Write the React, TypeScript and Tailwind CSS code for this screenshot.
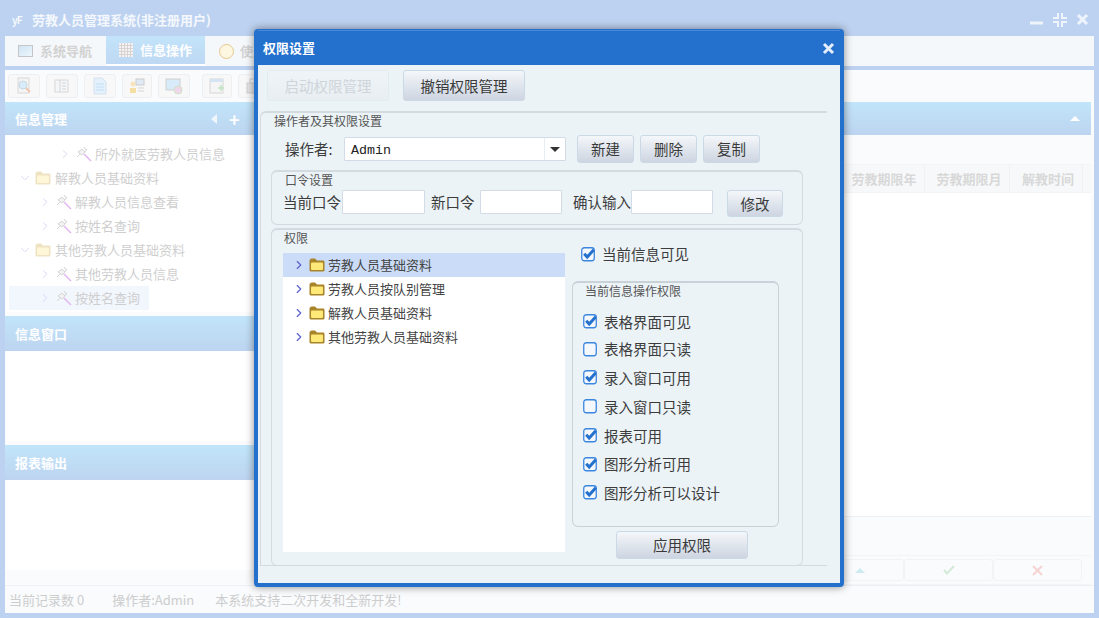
import React from 'react';
import { ChevronDown, ChevronRight } from 'lucide-react';

const font = { fontFamily: '"Noto Sans CJK SC", "Liberation Sans", sans-serif' };

function Folder({ faded }: { faded?: boolean }) {
    return (
        <svg width="16" height="14" viewBox="0 0 16 14" className="shrink-0">
            <path d="M0.5 3 Q0.5 0.5 3 0.5 H6 L8 2.5 H14.5 Q15.5 2.5 15.5 4 V12 Q15.5 13.5 14 13.5 H2 Q0.5 13.5 0.5 12 Z" fill={faded ? '#efe3c4' : '#a8842a'} />
            <rect x="2" y="4.5" width="12" height="7.5" rx="1" fill={faded ? '#fdf7d8' : '#fde878'} />
        </svg>
    );
}

function Wand() {
    return (
        <svg width="16" height="16" viewBox="0 0 16 16" className="shrink-0">
            <path d="M8 8 L15 15" stroke="#e3b8f0" strokeWidth="1.6" />
            <path d="M2 6 L6 9 L9 6 L6 3 Z M8 1 L10 4 M11 3 L9 6 M1 11 L4 8" stroke="#d6d6d6" strokeWidth="1" fill="#f2f2f2" />
        </svg>
    );
}

function TreeRow({ label, indent }: { label: string; indent: string }) {
    return (
        <div className={`flex h-6 items-center text-[13px] text-[#cfcfcf] ${indent}`}>
            <ChevronRight size={14} strokeWidth={1.5} className="text-[#d3d3f3]" />
            <span className="ml-[4px] mr-[3px]"><Wand /></span>
            {label}
        </div>
    );
}

function FolderRow({ label }: { label: string }) {
    return (
        <div className="flex h-6 items-center pl-[12px] text-[13px] text-[#cfcfcf]">
            <ChevronDown size={14} strokeWidth={1.5} className="text-[#d3d3f3]" />
            <span className="ml-[3px] mr-[4px]"><Folder faded /></span>
            {label}
        </div>
    );
}

function PanelHeader({ label }: { label: string }) {
    return (
        <div className="flex h-[35px] items-center bg-gradient-to-b from-[#c1e5fa] to-[#bdd4f0] pl-[10px] text-[13px] font-bold text-white">
            {label}
        </div>
    );
}

function ToolIcon({ variant }: { variant: number }) {
    return (
        <svg width="18" height="18" viewBox="0 0 18 18">
            {variant === 0 && <><rect x="3" y="1" width="11" height="15" fill="#f5f5f5" stroke="#d8d8d8" /><circle cx="8" cy="8" r="4" fill="#d8ecfa" stroke="#c8d8e0" /><path d="M11 11 L15 15" stroke="#f2c4b0" strokeWidth="2" /></>}
            {variant === 1 && <><rect x="2" y="3" width="13" height="12" fill="#f4f6f8" stroke="#d8d8d8" /><path d="M7 3 V15 M9 6 H13 M9 9 H13 M9 12 H13" stroke="#d5d5d5" /></>}
            {variant === 2 && <><path d="M3 1 H11 L15 5 V17 H3 Z" fill="#e4f1fb" stroke="#d5e2ee" /><path d="M5 7 H13 M5 10 H13 M5 13 H13" stroke="#bfe0f5" /></>}
            {variant === 3 && <><rect x="8" y="2" width="8" height="6" fill="#dfeaf5" stroke="#ccc" /><circle cx="5" cy="7" r="2.5" fill="#f6e4bd" /><path d="M2 16 V11 H8 V16 Z" fill="#f6dfa5" /><path d="M10 11 H16 M10 14 H16" stroke="#d5d5d5" /></>}
            {variant === 4 && <><rect x="1" y="2" width="14" height="11" fill="#d8ebf8" stroke="#cfcfcf" /><circle cx="13" cy="13" r="4" fill="#eed8ea" stroke="#cfe2c8" /></>}
            {variant === 5 && <><rect x="2" y="2" width="13" height="14" fill="#f5f5f5" stroke="#d5d5d5" /><rect x="2" y="2" width="13" height="3" fill="#d4e4f2" /><path d="M10 11 H16 M13 8 V14" stroke="#bfe3c0" strokeWidth="1.5" /></>}
            {variant === 6 && <><rect x="3" y="6" width="12" height="10" fill="#e4e4e4" stroke="#cfcfcf" /><path d="M6 6 V2 H12 V6" fill="none" stroke="#cfcfcf" /></>}
        </svg>
    );
}

function Btn({ label, size, disabled }: { label: string; size: string; disabled?: boolean }) {
    return (
        <button
            className={`flex shrink-0 items-center justify-center rounded-[3px] border text-[14.5px] ${size} ${
                disabled
                    ? 'border-[#e3ebf0] bg-gradient-to-b from-[#eef4f7] to-[#e8eef2] text-[#cfd5da]'
                    : 'border-[#cbd9e6] bg-gradient-to-b from-[#f4f7fa] to-[#cdd5e1] text-[#3a3a3a]'
            }`}
        >
            {label}
        </button>
    );
}

function Check({ label, on, row }: { label: string; on?: boolean; row: string }) {
    return (
        <div className={`flex items-center text-[14.5px] text-[#3c3c3c] ${row}`}>
            <svg width="15" height="15" viewBox="0 0 15 15" className="mr-[6px] shrink-0">
                <rect x="0.75" y="0.75" width="12.5" height="13" rx="2.5" fill="#f4f8fc" stroke="#3a86e0" strokeWidth="1.3" />
                {on && <path d="M3.2 6.8 L6.2 10 L12.8 2.8" fill="none" stroke="#2470cd" strokeWidth="3" />}
            </svg>
            {label}
        </div>
    );
}

function PermRow({ label, selected }: { label: string; selected?: boolean }) {
    return (
        <div className={`flex h-6 items-center text-[13px] text-[#444] ${selected ? 'bg-[#cbdcf8]' : ''}`}>
            <ChevronRight size={14} strokeWidth={2} className="ml-[9px] mr-[3px] text-[#5a62cc]" />
            <span className="mr-[3px]"><Folder /></span>
            {label}
        </div>
    );
}

function Field({ size }: { size: string }) {
    return <input readOnly className={`h-6 rounded-[1px] border border-[#d2dbe6] bg-white ${size}`} />;
}

function PermissionDialog() {
    return (
        <div className="absolute left-[254px] top-[29px] flex h-[558px] w-[590px] flex-col rounded-[4px] border-x-4 border-b-4 border-t border-[#2470cd] bg-[#ebf3f7] shadow-[0_0_8px_rgba(0,0,0,0.45)]">
            <div className="flex h-[35px] shrink-0 items-center justify-between border-t border-[#4a8ad8] bg-[#2470cd] pl-[5px] pr-[5px] text-[13px] font-bold text-white">
                权限设置
                <svg width="13" height="13" viewBox="0 0 13 13"><path d="M2 2 L11 11 M11 2 L2 11" stroke="#e4eefa" strokeWidth="3" /></svg>
            </div>

            <div className="ml-[9px] mt-[5px] flex gap-[14px]">
                <Btn label="启动权限管理" size="h-[31px] w-[122px]" disabled />
                <Btn label="撤销权限管理" size="h-[31px] w-[122px]" />
            </div>

            <div className="ml-[2px] mt-[10px] h-[455px] w-[567px] rounded-tl-[6px] border-b border-l border-t-2 border-[#d3dae0]">
                <div className="pl-[13px] text-[12px] leading-[16px] text-[#555]">操作者及其权限设置</div>
                <div className="mt-[6px] flex h-[28px] items-center pl-[24px]">
                    <span className="w-[59px] text-[14.5px] text-[#3c3c3c]">操作者:</span>
                    <div className="flex h-6 w-[222px] items-center rounded-[1px] border border-[#d2dbe6] bg-white pl-[6px] text-[13.33px] text-[#222]" style={{ fontFamily: '"Liberation Mono", monospace' }}>
                        <span className="pt-[3px]">Admin</span>
                        <span className="ml-auto flex h-full w-[21px] items-center justify-center border-l border-[#e8edf2]">
                            <span className="h-0 w-0 border-x-[5px] border-t-[5px] border-x-transparent border-t-[#333]" />
                        </span>
                    </div>
                    <div className="ml-[11px] flex gap-[6px]">
                        <Btn label="新建" size="h-[28px] w-[57px]" />
                        <Btn label="删除" size="h-[28px] w-[57px]" />
                        <Btn label="复制" size="h-[28px] w-[57px]" />
                    </div>
                </div>

                <div className="ml-[10px] mt-[7px] h-[55px] w-[532px] rounded-[6px] border border-t-2 border-[#d3dae0]">
                    <div className="pl-[13px] text-[12px] leading-[16px] text-[#555]">口令设置</div>
                    <div className="flex items-start pl-[11px] pt-[2px] text-[14.5px] leading-6 text-[#3c3c3c]">
                        <span className="w-[59px]">当前口令</span>
                        <Field size="w-[83px]" />
                        <span className="ml-[6px] w-[49px]">新口令</span>
                        <Field size="w-[82px]" />
                        <span className="ml-[11px] w-[58px]">确认输入</span>
                        <Field size="w-[82px]" />
                        <div className="ml-[14px]"><Btn label="修改" size="h-[27px] w-[56px]" /></div>
                    </div>
                </div>

                <div className="ml-[10px] mt-[3px] flex h-[338px] w-[532px] rounded-[6px] border border-t-2 border-[#d3dae0]">
                    <div className="flex flex-col">
                        <div className="pl-[12px] text-[12px] leading-[16px] text-[#555]">权限</div>
                        <div className="ml-[11px] mt-[7px] h-[299px] w-[282px] bg-white">
                            <PermRow label="劳教人员基础资料" selected />
                            <PermRow label="劳教人员按队别管理" />
                            <PermRow label="解教人员基础资料" />
                            <PermRow label="其他劳教人员基础资料" />
                        </div>
                    </div>
                    <div className="ml-[7px] flex flex-col">
                        <Check label="当前信息可见" on row="ml-[9px] mt-[12px] h-6" />
                        <div className="mt-[15px] h-[246px] w-[207px] rounded-[6px] border border-t-2 border-[#c9d2d9]">
                            <div className="pl-[12px] text-[12px] leading-[16px] text-[#555]">当前信息操作权限</div>
                            <div className="ml-[10px] mt-[9px] flex flex-col">
                                <Check label="表格界面可见" on row="h-[27px]" />
                                <Check label="表格界面只读" row="h-[28px]" />
                                <Check label="录入窗口可用" on row="h-[29px]" />
                                <Check label="录入窗口只读" row="h-[29px]" />
                                <Check label="报表可用" on row="h-[29px]" />
                                <Check label="图形分析可用" on row="h-[28px]" />
                                <Check label="图形分析可以设计" on row="h-[29px]" />
                            </div>
                        </div>
                        <div className="ml-[44px] mt-[4px]"><Btn label="应用权限" size="h-[28px] w-[132px]" /></div>
                    </div>
                </div>
            </div>
        </div>
    );
}

export default function App() {
    const tools = [
        { w: 'w-[32px]', ml: '' },
        { w: 'w-[32px]', ml: 'ml-[6px]' },
        { w: 'w-[32px]', ml: 'ml-[6px]' },
        { w: 'w-[30px]', ml: 'ml-[6px]' },
        { w: 'w-[32px]', ml: 'ml-[6px]' },
        { w: 'w-[30px]', ml: 'ml-[12px]' },
        { w: 'w-[30px]', ml: 'ml-[6px]' },
    ];

    return (
        <div className="relative flex h-[618px] w-[1099px] flex-col overflow-hidden bg-[#bdd2f0]" style={font}>
            {/* Title bar */}
            <div className="flex h-9 shrink-0 items-center pl-[12px] pr-[10px] pt-[3px] text-[13px] font-bold text-[#f4f8fd]">
                <span className="mr-[9px] w-[11px] text-[10px] leading-none tracking-[-1px]">yF</span>
                劳教人员管理系统(非注册用户)
                <div className="ml-auto flex items-center gap-[8px]">
                    <svg width="14" height="14" viewBox="0 0 14 14"><path d="M0 10 H13" stroke="#eef4fb" strokeWidth="3" /></svg>
                    <svg width="16" height="14" viewBox="0 0 16 14"><path d="M6 0 V5 H1 M10 0 V5 H15 M6 14 V9 H1 M10 14 V9 H15" fill="none" stroke="#eef4fb" strokeWidth="2" /></svg>
                    <svg width="13" height="13" viewBox="0 0 13 13"><path d="M2 2 L11 11 M11 2 L2 11" stroke="#eef4fb" strokeWidth="3" /></svg>
                </div>
            </div>

            <div className="mx-[5px] flex min-h-0 flex-1 flex-col bg-[#f9fbfd]">
                {/* Tabs */}
                <div className="flex h-[30px] shrink-0 bg-[#f5f8fb] text-[13px] font-bold text-[#d2d2d2]">
                    <div className="flex w-[100px] items-center pl-[13px]">
                        <span className="mr-[7px] h-[12px] w-[15px] border border-[#c5c5c5] bg-gradient-to-br from-[#cfe5f5] to-[#eef6fb]" />
                        系统导航
                    </div>
                    <div className="ml-px flex w-[99px] items-center border-b-2 border-white bg-gradient-to-b from-[#c2e4fa] to-[#bfd8f3] pl-[13px] text-white">
                        <svg width="14" height="14" viewBox="0 0 14 14" className="mr-[7px]">
                            <rect width="14" height="14" fill="#f4f2f2" />
                            <path d="M2.5 0 V14 M5.5 0 V14 M8.5 0 V14 M11.5 0 V14 M0 2.5 H14 M0 5.5 H14 M0 8.5 H14 M0 11.5 H14" stroke="#d8d2d2" />
                        </svg>
                        信息操作
                    </div>
                    <div className="flex items-center pl-[14px]">
                        <span className="mr-[6px] h-[15px] w-[15px] rounded-full border border-[#e8c890] bg-[#fdf6e0]" />
                        使用
                    </div>
                </div>
                <div className="h-1 shrink-0 bg-[#bdd2f0]" />

                {/* Toolbar */}
                <div className="flex h-[32px] shrink-0 items-center pl-[3px]">
                    {tools.map((t, i) => (
                        <div key={i} className={`flex h-6 items-center justify-center rounded-[3px] border border-[#eeeff2] bg-[#f8f8f9] ${t.w} ${t.ml}`}>
                            <ToolIcon variant={i} />
                        </div>
                    ))}
                </div>

                <div className="flex min-h-0 flex-1">
                    {/* Left accordion */}
                    <div className="flex w-[252px] shrink-0 flex-col">
                        <div className="flex h-[33px] items-center bg-gradient-to-b from-[#c1e5fa] to-[#bdd4f0] pl-[10px] text-[13px] font-bold text-white">
                            信息管理
                            <span className="ml-[144px] h-0 w-0 border-y-[5px] border-r-[6px] border-y-transparent border-r-[#f0f5fb]" />
                            <span className="ml-[12px] text-[18px] leading-none">+</span>
                        </div>
                        <div className="ml-[1px] h-[177px] bg-white pt-[7px]">
                            <TreeRow label="所外就医劳教人员信息" indent="pl-[52px]" />
                            <FolderRow label="解教人员基础资料" />
                            <TreeRow label="解教人员信息查看" indent="pl-[32px]" />
                            <TreeRow label="按姓名查询" indent="pl-[32px]" />
                            <FolderRow label="其他劳教人员基础资料" />
                            <TreeRow label="其他劳教人员信息" indent="pl-[32px]" />
                            <div className="pl-[3px]">
                                <div className="w-[140px] bg-[#f2f6fd]">
                                    <TreeRow label="按姓名查询" indent="pl-[29px]" />
                                </div>
                            </div>
                        </div>
                        <div className="mt-[4px]"><PanelHeader label="信息窗口" /></div>
                        <div className="ml-[1px] h-[90px] bg-white" />
                        <div className="mt-[4px]"><PanelHeader label="报表输出" /></div>
                        <div className="ml-[1px] h-[90px] bg-white" />
                    </div>

                    {/* Right grid */}
                    <div className="flex min-w-0 flex-1 flex-col pr-[3px]">
                        <div className="flex h-[33px] shrink-0 items-center justify-end bg-gradient-to-b from-[#c1e5fa] to-[#bdd4f0] pr-[11px]">
                            <span className="h-0 w-0 border-x-[5px] border-b-[5px] border-x-transparent border-b-white" />
                        </div>
                        <div className="h-[29px] shrink-0 bg-[#fafbfd]" />
                        <div className="flex h-[29px] shrink-0 items-center justify-end border-y border-[#f3f4f6] bg-[#f7f8fa] text-[13px] font-bold text-[#d8d8d8]">
                            <span className="flex h-full w-[85px] items-center justify-center border-r border-[#f0f1f3] pl-[4px]">劳教期限年</span>
                            <span className="flex h-full w-[85px] items-center justify-center border-r border-[#f0f1f3] pl-[4px]">劳教期限月</span>
                            <span className="flex h-full w-[73px] items-center justify-center border-r border-[#f0f1f3] pl-[4px]">解教时间</span>
                            <span className="w-[8px]" />
                        </div>
                        <div className="h-[324px] shrink-0 border-b border-[#eef0f2] bg-white" />
                        <div className="h-[38px] shrink-0" />
                        <div className="flex h-[30px] shrink-0 items-center justify-end border-y border-[#f3f4f6] pr-[9px]">
                            <div className="flex h-[22px] w-[88px] items-center justify-center rounded-[3px] border border-[#f2f3f5]">
                                <span className="h-0 w-0 border-x-[5px] border-b-[5px] border-x-transparent border-b-[#cdebf0]" />
                            </div>
                            <div className="flex h-[22px] w-[89px] items-center justify-center rounded-[3px] border border-[#f2f3f5]">
                                <svg width="12" height="10" viewBox="0 0 12 10"><path d="M1 5 L4 8.5 L11 1" fill="none" stroke="#d3ead8" strokeWidth="2" /></svg>
                            </div>
                            <div className="flex h-[22px] w-[89px] items-center justify-center rounded-[3px] border border-[#f2f3f5]">
                                <svg width="11" height="11" viewBox="0 0 11 11"><path d="M1 1 L10 10 M10 1 L1 10" stroke="#f6d3d3" strokeWidth="2" /></svg>
                            </div>
                        </div>
                    </div>
                </div>

                {/* Status bar */}
                <div className="flex h-[28px] shrink-0 items-center border-t border-[#eef0f3] pl-[4px] text-[13px] text-[#cdcdcd]">
                    <span>当前记录数 0</span>
                    <span className="ml-[28px]">操作者:Admin</span>
                    <span className="ml-[21px]">本系统支持二次开发和全新开发!</span>
                </div>
            </div>
            <div className="h-[5px] shrink-0" />

            <PermissionDialog />
        </div>
    );
}
